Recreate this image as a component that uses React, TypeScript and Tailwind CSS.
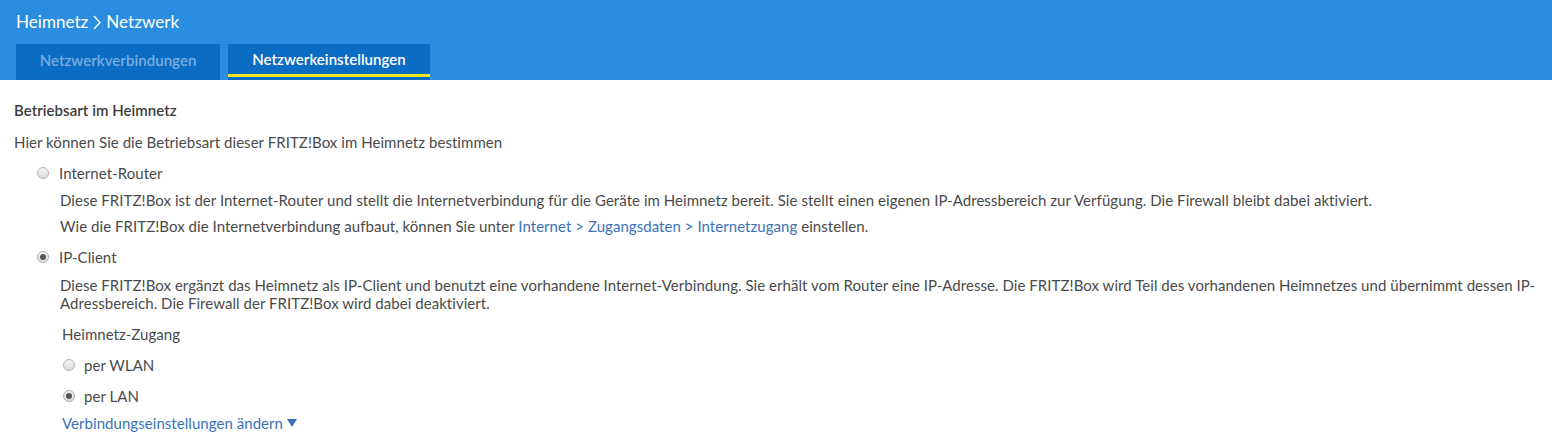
import React from "react";

function Radio({ checked }: { checked?: boolean }) {
  return (
    <span className="flex h-[12px] w-[12px] shrink-0 items-center justify-center rounded-full border border-[#b0b0b0] bg-gradient-to-b from-[#f4f4f4] to-[#dcdcdc]">
      {checked && <span className="h-[6px] w-[6px] rounded-full bg-[#555]" />}
    </span>
  );
}

export default function App() {
  return (
    <div className="min-h-[445px] bg-white font-['Lato','Open_Sans',sans-serif] text-[15px] tracking-[0.05px] text-[#4a4a4a]">
      {/* Header */}
      <div className="h-[80px] bg-[#2a8ddf] px-4">
        <div className="flex items-center pt-[12px] text-[17px] leading-5 text-white">
          Heimnetz
          <svg className="mx-[5px]" width="8" height="15" viewBox="0 0 8 15" fill="none">
            <path d="M1 1l6 6.5L1 14" stroke="white" strokeWidth="1.3" />
          </svg>
          Netzwerk
        </div>
        <div className="mt-[12px] flex gap-2">
          <div className="flex h-[36px] w-[204px] items-center justify-center bg-[#0b6cc4] pb-[3px] font-semibold text-[#79ade0]">
            Netzwerkverbindungen
          </div>
          <div className="h-[36px] w-[202px] bg-[#0b6cc4] pb-[3px]">
            <div className="flex h-full items-center justify-center border-b-[3px] border-[#f0e620] font-semibold text-white">
              Netzwerkeinstellungen
            </div>
          </div>
        </div>
      </div>

      {/* Content */}
      <div className="px-[14px] pr-[12px] pt-[20px]">
        <div className="font-semibold leading-5 text-[#3c3c3c]">Betriebsart im Heimnetz</div>
        <div className="mt-[12px] leading-5">
          Hier können Sie die Betriebsart dieser FRITZ!Box im Heimnetz bestimmen
        </div>

        <label className="mt-[11px] flex items-center gap-[10px] pl-[23px] leading-5">
          <Radio />
          Internet-Router
        </label>
        <div className="pl-[46px] leading-[18px]">
          <p className="mt-[8px]">
            Diese FRITZ!Box ist der Internet-Router und stellt die Internetverbindung für die Geräte im Heimnetz bereit. Sie stellt einen eigenen IP-Adressbereich zur Verfügung. Die Firewall bleibt dabei aktiviert.
          </p>
          <p className="mt-[8px]">
            Wie die FRITZ!Box die Internetverbindung aufbaut, können Sie unter{" "}
            <a className="text-[#3a72b8]">Internet &gt; Zugangsdaten &gt; Internetzugang</a> einstellen.
          </p>
        </div>

        <label className="mt-[12px] flex items-center gap-[10px] pl-[23px] leading-5">
          <Radio checked />
          IP-Client
        </label>
        <div className="pl-[46px]">
          <p className="mt-[9px] leading-[18px]">
            Diese FRITZ!Box ergänzt das Heimnetz als IP-Client und benutzt eine vorhandene Internet-Verbindung. Sie erhält vom Router eine IP-Adresse. Die FRITZ!Box wird Teil des vorhandenen Heimnetzes und übernimmt dessen IP-Adressbereich. Die Firewall der FRITZ!Box wird dabei deaktiviert.
          </p>
          <div className="mt-[12px] pl-[2px] leading-5">Heimnetz-Zugang</div>
          <label className="mt-[11px] flex items-center gap-[9px] pl-[3px] leading-5">
            <Radio />
            per WLAN
          </label>
          <label className="mt-[11px] flex items-center gap-[9px] pl-[3px] leading-5">
            <Radio checked />
            per LAN
          </label>
          <a className="mt-[7px] flex items-center gap-[4px] pl-[2px] leading-5 text-[#3a72b8]">
            Verbindungseinstellungen ändern
            <svg width="10" height="8" viewBox="0 0 10 8">
              <path d="M0 0h10L5 8z" fill="#3a72b8" />
            </svg>
          </a>
        </div>
      </div>
    </div>
  );
}
